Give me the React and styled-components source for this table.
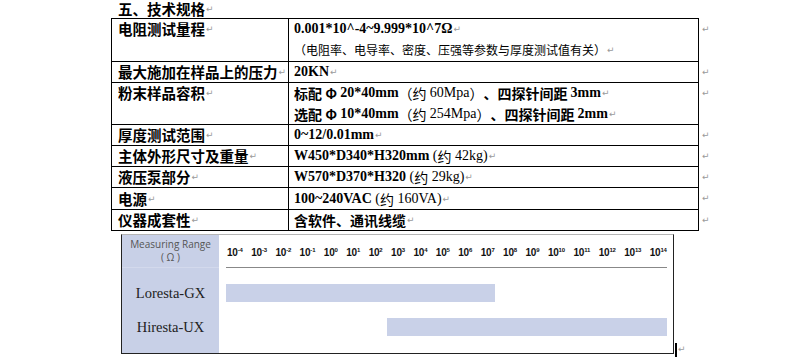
import React from "react";
import styled, { createGlobalStyle } from "styled-components";

const Global = createGlobalStyle`
  body {
    margin: 0;
    background: #fff;
    font-family: "Liberation Serif", "Noto Sans CJK SC", serif;
    color: #000;
  }
`;

const Page = styled.div`
  width: 789px;
  height: 357px;
  overflow: hidden;
  padding-left: 111px;
  box-sizing: border-box;
`;

const Title = styled.div`
  height: 18px;
  display: flex;
  align-items: center;
  padding-left: 7px;
  font-family: "Noto Sans CJK SC", sans-serif;
  font-weight: 700;
  font-size: 14.5px;
  line-height: 18px;
`;

const Mark = styled.span`
  color: #9a9a9a;
  font-family: "DejaVu Sans", sans-serif;
  font-size: 9px;
  font-weight: 400;
  line-height: 10px;
  margin-left: 1px;
`;

const Table = styled.table`
  border-collapse: collapse;
  table-layout: fixed;
  font-size: 12px;
  line-height: 12px;
`;

const Label = styled.td`
  width: 177px;
  border: 1.5px solid #000;
  padding: 0 0 0 6px;
  vertical-align: top;
  box-sizing: border-box;
`;

const Value = styled.td`
  width: 404px;
  border: 1.5px solid #000;
  padding: 0 0 0 5px;
  vertical-align: top;
`;

const Side = styled.td`
  width: 14px;
  padding: 0 0 0 2px;
  vertical-align: top;
`;

const Line = styled.div`
  height: ${(p) => p.$h || 20}px;
  display: flex;
  align-items: center;
  white-space: pre;
  overflow: visible;
`;

const LabelText = styled.span`
  font-family: "Noto Sans CJK SC", sans-serif;
  font-weight: 700;
  font-size: 14.5px;
  line-height: 16px;
`;

const B = styled.span`
  font-family: "Liberation Serif", serif;
  font-weight: 700;
  font-size: 14px;
  line-height: 16px;
`;

const Cn = styled.span`
  font-family: "Noto Sans CJK SC", sans-serif;
  font-weight: ${(p) => (p.$bold ? 700 : 400)};
  font-size: ${(p) => p.$size || 14}px;
  line-height: 16px;
`;

const R = styled.span`
  font-family: "Liberation Serif", serif;
  font-size: 14px;
  line-height: 16px;
`;

const ChartRow = styled.div`
  display: flex;
  align-items: flex-end;
  margin-top: 3px;
  margin-left: 10px;
`;

const Chart = styled.div`
  width: 553px;
  height: 120px;
  display: grid;
  grid-template-columns: 97px 1fr;
  border-top: 1px solid #b5b5b5;
  border-left: 1.5px solid #222;
  border-right: 1.5px solid #222;
  border-bottom: 1.5px solid #222;
  box-sizing: border-box;
`;

const NameCol = styled.div`
  background: #c8d0e7;
  display: flex;
  flex-direction: column;
  font-family: "Liberation Serif", serif;
  font-size: 14.5px;
  color: #222;
`;

const HeadCell = styled.div`
  height: 33px;
  box-sizing: border-box;
  font-family: "Open Sans", "Liberation Sans", sans-serif;
  font-size: 10px;
  color: #555;
  text-align: center;
  line-height: 13px;
  padding-top: 3px;
  border-bottom: 1px solid #d3d9ec;
`;

const Names = styled.div`
  display: flex;
  flex-direction: column;
  gap: 16px;
  padding-top: 16px;
`;

const Name = styled.div`
  height: 18px;
  line-height: 18px;
  text-align: center;
`;

const Plot = styled.div`
  display: flex;
  flex-direction: column;
  padding: 0 6px 0 7px;
`;

const Ticks = styled.div`
  height: 33px;
  box-sizing: border-box;
  display: flex;
  justify-content: space-between;
  align-items: center;
  padding: 2px 0 0 1px;
  border-bottom: 1px solid #888;
  font-family: "Liberation Sans", sans-serif;
  font-weight: 700;
  font-size: 10px;
  letter-spacing: -0.2px;
  color: #111;
  sup {
    font-size: 6px;
    vertical-align: 4px;
  }
`;

const Bars = styled.div`
  display: flex;
  flex-direction: column;
  gap: 16px;
  padding-top: 16px;
`;

const Bar = styled.div`
  height: 18px;
  background: #c9d1e8;
`;

const Cursor = styled.div`
  width: 2px;
  height: 14px;
  background: #000;
  margin-left: 1px;
  margin-bottom: -3px;
`;

const exps = [-4, -3, -2, -1, 0, 1, 2, 3, 4, 5, 6, 7, 8, 9, 10, 11, 12, 13, 14];

export default function App() {
  const M = <Mark>↵</Mark>;
  return (
    <Page>
      <Global />
      <Title>五、技术规格{M}</Title>
      <Table>
        <tbody>
          <tr>
            <Label>
              <Line>
                <LabelText>电阻测试量程</LabelText>
                {M}
              </Line>
              <Line $h={22} />
            </Label>
            <Value>
              <Line>
                <B>0.001*10^-4~9.999*10^7Ω</B>
                {M}
              </Line>
              <Line $h={22}>
                <Cn $size={12}>（电阻率、电导率、密度、压强等参数与厚度测试值有关）</Cn>
                {M}
              </Line>
            </Value>
            <Side>
              <Line>{M}</Line>
            </Side>
          </tr>
          <tr>
            <Label>
              <Line>
                <LabelText>最大施加在样品上的压力</LabelText>
                {M}
              </Line>
            </Label>
            <Value>
              <Line>
                <B>20KN</B>
                {M}
              </Line>
            </Value>
            <Side>
              <Line>{M}</Line>
            </Side>
          </tr>
          <tr>
            <Label>
              <Line>
                <LabelText>粉末样品容积</LabelText>
                {M}
              </Line>
              <Line $h={21} />
            </Label>
            <Value>
              <Line>
                <Cn $bold>标配 Φ </Cn>
                <B>20*40mm</B>
                <Cn>（约 </Cn>
                <R>60Mpa</R>
                <Cn>）</Cn>
                <Cn $bold>、四探针间距 </Cn>
                <B>3mm</B>
                {M}
              </Line>
              <Line $h={21}>
                <Cn $bold>选配 Φ </Cn>
                <B>10*40mm</B>
                <Cn>（约 </Cn>
                <R>254Mpa</R>
                <Cn>）</Cn>
                <Cn $bold>、四探针间距 </Cn>
                <B>2mm</B>
                {M}
              </Line>
            </Value>
            <Side>
              <Line>{M}</Line>
            </Side>
          </tr>
          <tr>
            <Label>
              <Line>
                <LabelText>厚度测试范围</LabelText>
                {M}
              </Line>
            </Label>
            <Value>
              <Line>
                <B>0~12/0.01mm</B>
                {M}
              </Line>
            </Value>
            <Side>
              <Line>{M}</Line>
            </Side>
          </tr>
          <tr>
            <Label>
              <Line>
                <LabelText>主体外形尺寸及重量</LabelText>
                {M}
              </Line>
            </Label>
            <Value>
              <Line>
                <B>W450*D340*H320mm </B>
                <R>(</R>
                <Cn>约</Cn>
                <R> 42kg)</R>
                {M}
              </Line>
            </Value>
            <Side>
              <Line>{M}</Line>
            </Side>
          </tr>
          <tr>
            <Label>
              <Line>
                <LabelText>液压泵部分</LabelText>
                {M}
              </Line>
            </Label>
            <Value>
              <Line>
                <B>W570*D370*H320 </B>
                <R>(</R>
                <Cn>约</Cn>
                <R> 29kg)</R>
                {M}
              </Line>
            </Value>
            <Side>
              <Line>{M}</Line>
            </Side>
          </tr>
          <tr>
            <Label>
              <Line $h={21}>
                <LabelText>电源</LabelText>
                {M}
              </Line>
            </Label>
            <Value>
              <Line $h={21}>
                <B>100~240VAC </B>
                <R>(</R>
                <Cn>约</Cn>
                <R> 160VA)</R>
                {M}
              </Line>
            </Value>
            <Side>
              <Line $h={21}>{M}</Line>
            </Side>
          </tr>
          <tr>
            <Label>
              <Line>
                <LabelText>仪器成套性</LabelText>
                {M}
              </Line>
            </Label>
            <Value>
              <Line>
                <Cn $bold>含软件、通讯线缆</Cn>
                {M}
              </Line>
            </Value>
            <Side>
              <Line>{M}</Line>
            </Side>
          </tr>
        </tbody>
      </Table>
      <ChartRow>
        <Chart>
          <NameCol>
            <HeadCell>
              Measuring Range
              <br />( Ω )
            </HeadCell>
            <Names>
              <Name>Loresta-GX</Name>
              <Name>Hiresta-UX</Name>
            </Names>
          </NameCol>
          <Plot>
            <Ticks>
              {exps.map((e) => (
                <span key={e}>
                  10<sup>{e}</sup>
                </span>
              ))}
            </Ticks>
            <Bars>
              <Bar style={{ marginRight: 172 }} />
              <Bar style={{ marginLeft: 161 }} />
            </Bars>
          </Plot>
        </Chart>
        <Cursor />
        <Mark>↵</Mark>
      </ChartRow>
    </Page>
  );
}
